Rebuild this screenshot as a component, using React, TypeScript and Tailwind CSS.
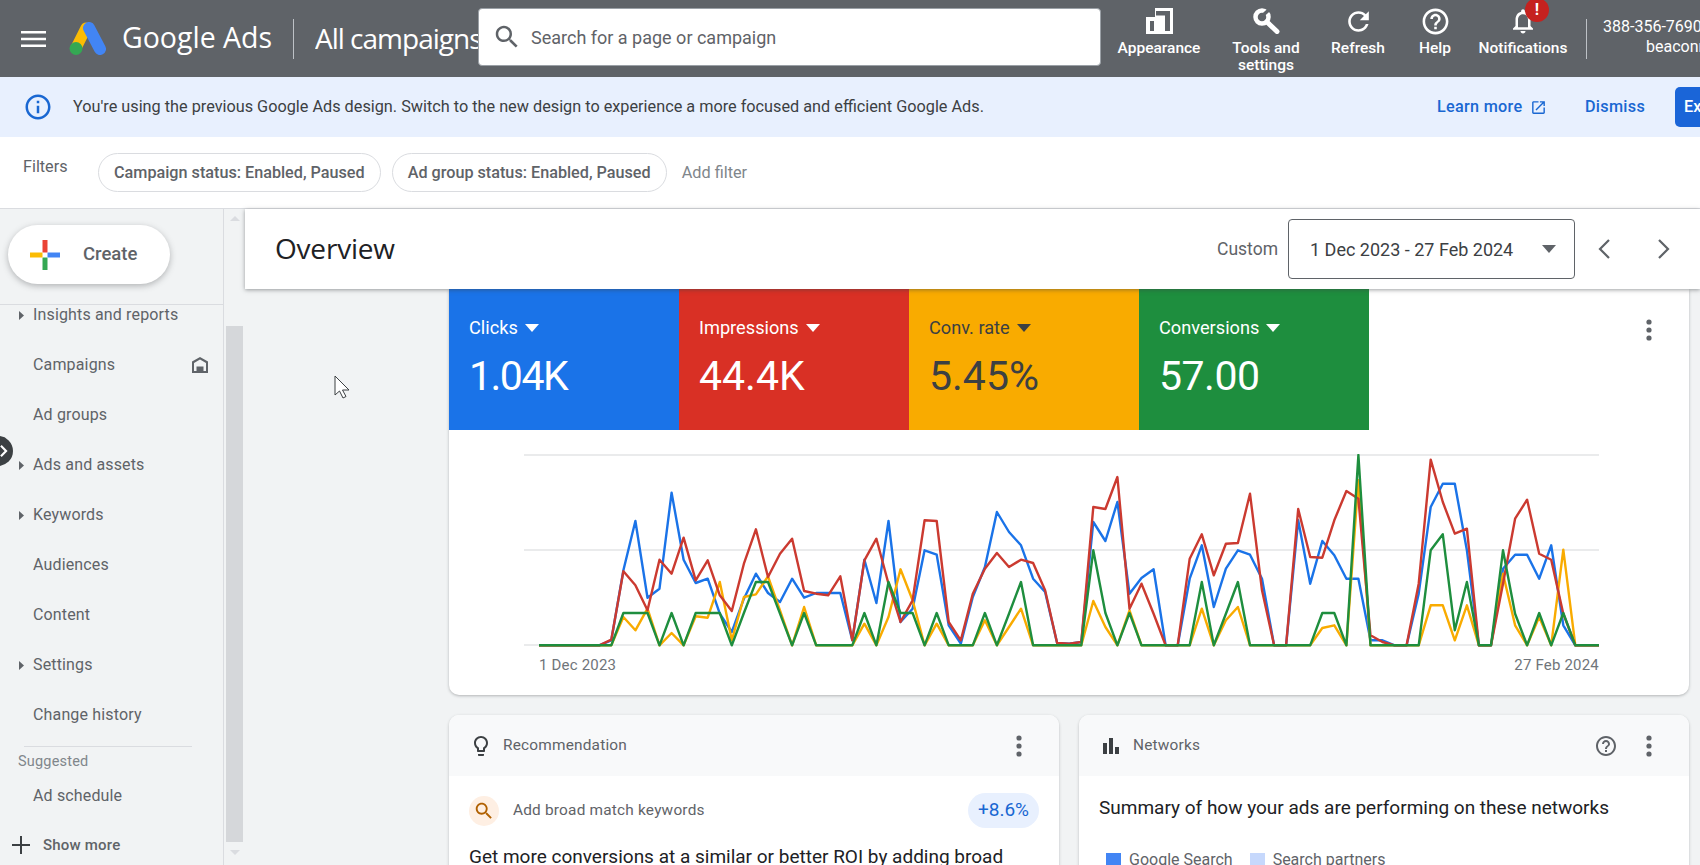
import * as React from 'react'

const P = {
  search:
    'M15.5 14h-.79l-.28-.27C15.41 12.59 16 11.11 16 9.5 16 5.91 13.09 3 9.5 3S3 5.91 3 9.5 5.91 16 9.5 16c1.61 0 3.09-.59 4.23-1.57l.27.28v.79l5 4.99L20.49 19l-4.99-5zm-6 0C7.01 14 5 11.99 5 9.5S7.01 5 9.5 5 14 7.01 14 9.5 11.99 14 9.5 14z',
  refresh:
    'M17.65 6.35C16.2 4.9 14.21 4 12 4c-4.42 0-7.99 3.58-7.99 8s3.57 8 7.99 8c3.73 0 6.84-2.55 7.73-6h-2.08c-.82 2.33-3.04 4-5.65 4-3.31 0-6-2.69-6-6s2.69-6 6-6c1.66 0 3.14.69 4.22 1.78L13 11h7V4l-2.35 2.35z',
  help:
    'M11 18h2v-2h-2v2zm1-16C6.48 2 2 6.48 2 12s4.48 10 10 10 10-4.48 10-10S17.52 2 12 2zm0 18c-4.41 0-8-3.59-8-8s3.59-8 8-8 8 3.59 8 8-3.59 8-8 8zm0-14c-2.21 0-4 1.79-4 4h2c0-1.1.9-2 2-2s2 .9 2 2c0 2-3 1.75-3 5h2c0-2.25 3-2.5 3-5 0-2.21-1.79-4-4-4z',
  bell:
    'M12 22c1.1 0 2-.9 2-2h-4c0 1.1.9 2 2 2zm6-6v-5c0-3.07-1.63-5.64-4.5-6.32V4c0-.83-.67-1.5-1.5-1.5s-1.5.67-1.5 1.5v.68C7.64 5.36 6 7.92 6 11v5l-2 2v1h16v-1l-2-2zm-2 1H8v-6c0-2.48 1.51-4.5 4-4.5s4 2.02 4 4.5v6z',
  info:
    'M11 7h2v2h-2V7zm0 4h2v6h-2v-6zm1-9C6.48 2 2 6.48 2 12s4.48 10 10 10 10-4.48 10-10S17.52 2 12 2zm0 18c-4.41 0-8-3.59-8-8s3.59-8 8-8 8 3.59 8 8-3.59 8-8 8z',
  open:
    'M19 19H5V5h7V3H5c-1.11 0-2 .9-2 2v14c0 1.1.89 2 2 2h14c1.1 0 2-.9 2-2v-7h-2v7zM14 3v2h3.59l-9.83 9.83 1.41 1.41L19 6.41V10h2V3h-7z',
  bulb:
    'M9 21c0 .55.45 1 1 1h4c.55 0 1-.45 1-1v-1H9v1zm3-19C8.14 2 5 5.14 5 9c0 2.38 1.19 4.47 3 5.74V17c0 .55.45 1 1 1h6c.55 0 1-.45 1-1v-2.26c1.81-1.27 3-3.36 3-5.74 0-3.86-3.14-7-7-7zm2.85 11.1l-.85.6V16h-4v-2.3l-.85-.6C7.8 12.16 7 10.63 7 9c0-2.76 2.24-5 5-5s5 2.24 5 5c0 1.63-.8 3.16-2.15 4.1z',
  bars: 'M4 9h4v11H4zM10 4h4v16h-4zM16 13h4v7h-4z',
}

function Icon({ d, className }: { d: string; className?: string }) {
  return (
    <svg viewBox="0 0 24 24" fill="currentColor" className={className}>
      <path d={d} />
    </svg>
  )
}

function Kebab() {
  return (
    <svg viewBox="0 0 6 22" fill="#5f6368" className="h-[22px] w-[6px]">
      <circle cx="3" cy="3" r="2.6" />
      <circle cx="3" cy="11" r="2.6" />
      <circle cx="3" cy="19" r="2.6" />
    </svg>
  )
}

function Caret({ color }: { color: string }) {
  return (
    <svg viewBox="0 0 14 8" className="h-[8px] w-[14px]" fill={color}>
      <path d="M0 0h14L7 8z" />
    </svg>
  )
}

type ToolConfig = {
  label: string[]
  width: string
  icon: React.ReactNode
}

const tools: ToolConfig[] = [
  {
    label: ['Appearance'],
    width: 'w-[110px]',
    icon: (
      <svg viewBox="0 0 27 26" className="h-[26px] w-[27px]" fill="#fff">
        <path fillRule="evenodd" d="M0 9h9V0h18v26H0zM4 13v10h4V13zM10 3v4.500h9V23h5V3z" />
      </svg>
    ),
  },
  {
    label: ['Tools and', 'settings'],
    width: 'w-[104px]',
    icon: (
      <svg viewBox="0 0 27 26" className="h-[26px] w-[27px]" fill="none" stroke="#fff">
        <circle cx="9" cy="9" r="6.500" strokeWidth="4.500" />
        <path d="M14 14L24 23.500" strokeWidth="5" strokeLinecap="round" />
        <path d="M9 8L17 1" stroke="#5f6368" strokeWidth="3.500" />
      </svg>
    ),
  },
  { label: ['Refresh'], width: 'w-[80px]', icon: <Icon d={P.refresh} className="h-[31px] w-[31px] text-white" /> },
  { label: ['Help'], width: 'w-[74px]', icon: <Icon d={P.help} className="h-[31px] w-[31px] text-white" /> },
  {
    label: ['Notifications'],
    width: 'w-[102px]',
    icon: (
      <span className="relative block">
        <Icon d={P.bell} className="h-[30px] w-[30px] text-white" />
        <span className="absolute -top-[8px] left-[17px] flex h-[24px] w-[24px] items-center justify-center rounded-full bg-[#c5221f] text-[16px] font-bold text-white">
          !
        </span>
      </span>
    ),
  },
]

function Header() {
  return (
    <header className="flex h-[77px] shrink-0 items-center bg-[#5f6368] text-white">
      <svg viewBox="0 0 25 16" className="ml-[21px] h-[16px] w-[25px] shrink-0" fill="#fff">
        <path d="M0 0h25v2.600H0zM0 6.700h25v2.600H0zM0 13.400h25V16H0z" />
      </svg>
      <svg viewBox="0 0 37 33" className="ml-[23px] h-[33px] w-[37px] shrink-0">
        <path d="M17 6 L7 26" stroke="#fbbc04" strokeWidth="11" strokeLinecap="round" />
        <path d="M20 6 L31 27" stroke="#4285f4" strokeWidth="12" strokeLinecap="round" />
        <circle cx="7" cy="26.500" r="6.500" fill="#34a853" />
      </svg>
      <span className="ml-[16px] -mt-[3px] w-[150px] shrink-0 whitespace-nowrap font-['Open_Sans',sans-serif] text-[28.500px]">
        Google Ads
      </span>
      <span className="ml-[21px] h-[40px] w-px shrink-0 bg-[#bdc1c6]" />
      <div className="ml-[21px] -mt-[2px] w-[163px] shrink-0 overflow-hidden whitespace-nowrap font-['Open_Sans',sans-serif] text-[28px] tracking-[-1px]">
        All campaigns
      </div>
      <div className="-mt-[3px] flex h-[58px] w-[623px] shrink-0 items-center rounded-[4px] border border-[#9aa0a6] bg-white text-[#5f6368]">
        <Icon d={P.search} className="ml-[13px] h-[30px] w-[30px] text-[#5f6368]" />
        <span className="ml-[9px] text-[18px]">Search for a page or campaign</span>
      </div>
      <div className="flex shrink-0 self-stretch pl-[3px]">
        {tools.map((tool) => (
          <div key={tool.label[0]} className={`flex ${tool.width} shrink-0 flex-col items-center pt-[5px]`}>
            <div className="flex h-[32px] items-center justify-center">{tool.icon}</div>
            <div className="mt-[3px] whitespace-nowrap text-center text-[15.500px] font-medium leading-[17px]">
              {tool.label.map((line) => (
                <div key={line}>{line}</div>
              ))}
            </div>
          </div>
        ))}
      </div>
      <span className="ml-[12px] h-[40px] w-px shrink-0 bg-[#bdc1c6]" />
      <div className="ml-[16px] -mt-[3px] shrink-0 whitespace-nowrap text-[16px] leading-[20px]">
        <div>388-356-7690</div>
        <div className="ml-[43px]">beaconn</div>
      </div>
    </header>
  )
}

function Banner() {
  return (
    <div className="flex h-[60px] shrink-0 items-center whitespace-nowrap bg-[#e8f0fe]">
      <Icon d={P.info} className="ml-[23px] h-[30px] w-[30px] shrink-0 text-[#1967d2]" />
      <span className="ml-[20px] w-[1364px] shrink-0 text-[16.250px] text-[#3c4043]">
        You're using the previous Google Ads design. Switch to the new design to experience a more focused and efficient
        Google Ads.
      </span>
      <span className="w-[86px] shrink-0 text-[16.200px] font-medium tracking-[0.3px] text-[#1967d2]">Learn more</span>
      <Icon d={P.open} className="ml-[7px] h-[17px] w-[17px] shrink-0 text-[#1967d2]" />
      <span className="ml-[38px] w-[59px] shrink-0 text-[16.200px] font-medium tracking-[0.3px] text-[#1967d2]">Dismiss</span>
      <div className="ml-[31px] flex h-[40px] w-[100px] shrink-0 items-center rounded-[5px] bg-[#1a65d8] pl-[9px] text-[16.200px] font-medium text-white">
        Explore
      </div>
    </div>
  )
}

function Filters() {
  const chips = ['Campaign status: Enabled, Paused', 'Ad group status: Enabled, Paused']
  return (
    <div className="flex h-[72px] shrink-0 border-b border-[#dadce0] bg-white">
      <span className="ml-[23px] mt-[18px] w-[75px] text-[16.200px] text-[#5f6368]">Filters</span>
      <div className="mt-[16px] flex h-[39px] items-center gap-[11px]">
        {chips.map((chip) => (
          <span
            key={chip}
            className="flex h-[39px] items-center rounded-full border border-[#dadce0] px-[15px] pt-[2px] text-[16.200px] font-medium text-[#5f6368]"
          >
            {chip}
          </span>
        ))}
        <span className="ml-[4px] pt-[2px] text-[16.300px] text-[#80868b]">Add filter</span>
      </div>
    </div>
  )
}

const navItems = [
  { label: 'Insights and reports', arrow: true },
  { label: 'Campaigns', home: true },
  { label: 'Ad groups' },
  { label: 'Ads and assets', arrow: true },
  { label: 'Keywords', arrow: true },
  { label: 'Audiences' },
  { label: 'Content' },
  { label: 'Settings', arrow: true },
  { label: 'Change history' },
]

function Sidebar() {
  return (
    <aside className="flex h-full w-[245px] shrink-0 bg-[#f1f3f4]">
      <div className="flex w-[224px] shrink-0 flex-col border-r border-[#dadce0]">
        <div className="h-[96px] shrink-0 border-b border-[#dadce0] pl-[8px] pt-[16px]">
          <div className="flex h-[59px] w-[162px] items-center rounded-full bg-white shadow-[0_2px_6px_rgba(60,64,67,0.35)]">
            <svg viewBox="0 0 30 30" className="ml-[22px] h-[30px] w-[30px]">
              <path d="M12.500 0h5v12.500h-5z" fill="#ea4335" />
              <path d="M17.500 12.500H30v5H17.500z" fill="#4285f4" />
              <path d="M12.500 17.500h5V30h-5z" fill="#34a853" />
              <path d="M0 12.500h12.500v5H0z" fill="#fbbc04" />
            </svg>
            <span className="ml-[23px] text-[18.500px] font-medium text-[#5f6368]">Create</span>
          </div>
        </div>
        <div className="flex-1 overflow-hidden">
          <div className="-mt-[15px]">
            {navItems.map((item) => (
              <div key={item.label} className="flex h-[50px] items-center text-[16px] tracking-[0.15px] text-[#5f6368]">
                <span className="flex w-[33px] justify-end pr-[9px]">
                  {item.arrow && (
                    <svg viewBox="0 0 5 9" className="h-[9px] w-[5px]" fill="#5f6368">
                      <path d="M0 0l5 4.500L0 9z" />
                    </svg>
                  )}
                </span>
                <span>{item.label}</span>
                {item.home && (
                  <svg viewBox="0 0 18 16" className="ml-auto mr-[14px] h-[16px] w-[18px]" fill="#5f6368">
                    <path fillRule="evenodd" d="M9 0l8 4.500V16H1V4.500zM3 6v8h2.500V9.500h7V14H15V6L9 2.500z" />
                  </svg>
                )}
              </div>
            ))}
            <div className="ml-[24px] mr-[31px] mt-[6px] border-t border-[#dadce0]" />
            <div className="ml-[18px] mt-[6px] text-[14.500px] leading-[18px] tracking-[0.2px] text-[#80868b]">Suggested</div>
            <div className="ml-[33px] mt-[14px] text-[16px] leading-[22px] tracking-[0.15px] text-[#5f6368]">Ad schedule</div>
            <div className="mt-[27px] flex h-[22px] items-center">
              <svg viewBox="0 0 18 18" className="ml-[12px] h-[18px] w-[18px]" fill="#3c4043">
                <path d="M8 0h2v8h8v2h-8v8H8v-8H0V8h8z" />
              </svg>
              <span className="ml-[13px] text-[15px] font-medium tracking-[0.2px] text-[#5f6368]">Show more</span>
            </div>
          </div>
        </div>
      </div>
      <div className="flex w-[21px] shrink-0 flex-col items-center px-[2px] pt-[7px]">
        <svg viewBox="0 0 10 5" className="h-[5px] w-[10px]" fill="#dadce0">
          <path d="M5 0l5 5H0z" />
        </svg>
        <div className="mt-[105px] h-[516px] w-[17px] shrink-0 bg-[#d5d7da]" />
        <svg viewBox="0 0 10 5" className="mt-[8px] h-[5px] w-[10px]" fill="#dadce0">
          <path d="M0 0h10L5 5z" />
        </svg>
      </div>
    </aside>
  )
}

function OverviewBar() {
  return (
    <div className="relative z-10 flex h-[80px] shrink-0 items-center bg-white shadow-[0_1px_4px_rgba(60,64,67,0.5)]">
      <h1 className="-mt-[3px] ml-[30px] font-['Open_Sans',sans-serif] text-[28px] tracking-[-0.2px] text-[#202124]">
        Overview
      </h1>
      <span className="ml-auto text-[17.500px] text-[#5f6368]">Custom</span>
      <div className="ml-[10px] flex h-[60px] w-[287px] items-center rounded-[4px] border border-[#5f6368] pl-[21px] pr-[18px] text-[18px] text-[#3c4043]">
        <span>1 Dec 2023 - 27 Feb 2024</span>
        <span className="ml-auto">
          <Caret color="#5f6368" />
        </span>
      </div>
      <svg viewBox="0 0 12 20" className="ml-[23px] h-[20px] w-[12px]" fill="none" stroke="#5f6368" strokeWidth="2.200">
        <path d="M11 1L2 10l9 9" />
      </svg>
      <svg viewBox="0 0 12 20" className="ml-[48px] mr-[30px] h-[20px] w-[12px]" fill="none" stroke="#5f6368" strokeWidth="2.200">
        <path d="M1 1l9 9-9 9" />
      </svg>
    </div>
  )
}

const metrics = [
  { label: 'Clicks', value: '1.04K', bg: 'bg-[#1a73e8]', text: 'text-white', caret: '#fff', track: 'tracking-[-1.5px]' },
  { label: 'Impressions', value: '44.4K', bg: 'bg-[#d93025]', text: 'text-white', caret: '#fff', track: '' },
  { label: 'Conv. rate', value: '5.45%', bg: 'bg-[#f9ab00]', text: 'text-[#3c4043]', caret: '#3c4043', track: '' },
  { label: 'Conversions', value: '57.00', bg: 'bg-[#1e8e3e]', text: 'text-white', caret: '#fff', track: 'tracking-[-0.5px]' },
]

// values are read off the reference, 524 = top grid line, 1095 = baseline (3 units per px)
const B = 1095
const chartData = {
  blue: [
    B, B, B, B, B, B, 1080, 870, 722, 952, 925, 637, 838, 908, 895, 1000, 1055, 955, 880, 938, 965, 895, 952, 938, 938,
    938, 1080, 838, 968, 722, 1025, 985, 810, 823, 1035, 1090, 950, 860, 695, 755, 795, 895, 935, 1088, 1090, 1085, 725,
    782, 665, 940, 893, 867, B, B, 895, 795, 980, 865, 810, 823, 895, B, B, 720, 910, 782, 825, 895, 895, 1080, 1080, B,
    B, 940, 680, 610, 610, 810, B, B, 865, 823, 823, 895, 795, 1035, B, B, B,
  ],
  yellow: [
    B, B, B, B, B, B, B, 1010, 1050, 985, B, 1058, B, 1008, 1012, 905, 1080, 950, 942, 888, 990, B, 980, B, B, B, B,
    1030, B, 1010, 867, 960, B, 1030, B, B, B, 1020, B, 1040, 985, B, B, B, B, B, 962, 1040, B, 990, B, B, B, B, B, 985,
    B, 1020, 980, B, B, B, B, B, B, 1043, 1035, B, 600, B, B, B, B, B, 975, 975, 1080, 975, B, B, 880, 1035, B, 1010, B,
    808, B, B, B,
  ],
  red: [
    B, B, B, B, B, B, 1078, 873, 915, 990, 838, 880, 772, 900, 840, 945, 992, 850, 747, 890, 820, 775, 932, 940, 945,
    888, 1080, 840, 775, 910, 1025, 960, 720, 722, 1025, 1080, 940, 865, 818, 860, 838, 848, 930, 1088, 1090, 1085, 680,
    686, 590, 985, 910, 1000, B, B, 835, 762, 885, 790, 788, 640, 930, B, B, 686, 830, 832, 720, 632, 655, 1065, 1085, B,
    B, 910, 538, 665, 760, 745, B, B, 910, 715, 658, 820, 838, 1000, B, B, B,
  ],
  green: [
    B, B, B, B, B, B, B, 998, 998, 998, B, 998, B, 998, 998, 998, B, 998, 905, 905, 1000, B, 998, B, B, B, B, 998, B, 905,
    998, 998, B, 998, B, B, B, 998, B, 1000, 905, B, B, B, B, B, 810, 998, B, 998, B, B, B, B, B, 905, B, 1000, 905, B, B,
    B, B, B, B, 998, 998, B, 524, B, B, B, B, B, 810, 762, 1050, 905, B, B, 810, 1000, B, 998, B, 998, B, B, B,
  ],
}

function toPoints(series: number[]) {
  return series.map((v, i) => `${(15 + 12.05 * i).toFixed(1)},${((v - 524) / 3 + 1).toFixed(1)}`).join(' ')
}

function Chart() {
  return (
    <div className="ml-[75px] mr-[90px] mt-[24px]">
      <svg viewBox="0 0 1075 194" className="block h-[194px] w-[1075px]" fill="none">
        {[1, 96, 191].map((y) => (
          <line key={y} x1="0" x2="1075" y1={y} y2={y} stroke="#e3e4e6" strokeWidth="1.500" />
        ))}
        <polyline points={toPoints(chartData.blue)} stroke="#1a73e8" strokeWidth="2.400" strokeLinejoin="round" />
        <polyline points={toPoints(chartData.yellow)} stroke="#f9ab00" strokeWidth="2.400" strokeLinejoin="round" />
        <polyline points={toPoints(chartData.red)} stroke="#cb3a30" strokeWidth="2.400" strokeLinejoin="round" />
        <polyline points={toPoints(chartData.green)} stroke="#1e8e3e" strokeWidth="2.400" strokeLinejoin="round" />
      </svg>
      <div className="ml-[15px] mt-[6px] flex justify-between text-[15px] tracking-[0.2px] text-[#70757a]">
        <span>1 Dec 2023</span>
        <span>27 Feb 2024</span>
      </div>
    </div>
  )
}

function CardHead({ title, icon, children }: { title: string; icon: React.ReactNode; children: React.ReactNode }) {
  return (
    <div className="flex h-[61px] items-center bg-[#f8f9fa] pl-[20px] pr-[37px]">
      <span className="flex w-[34px] justify-start">{icon}</span>
      <span className="text-[15.400px] tracking-[0.2px] text-[#5f6368]">{title}</span>
      <span className="ml-auto flex items-center gap-[28px]">{children}</span>
    </div>
  )
}

export default function App() {
  return (
    <div className="relative flex h-[865px] w-[1700px] flex-col overflow-hidden bg-[#f1f3f4] font-['Roboto',sans-serif]">
      <Header />
      <Banner />
      <Filters />
      <div className="flex min-h-0 flex-1">
        <Sidebar />
        <main className="flex min-w-0 flex-1 flex-col">
          <OverviewBar />
          <div className="flex-1 overflow-hidden pl-[204px] pr-[11px]">
            <section className="h-[406px] rounded-b-[10px] bg-white shadow-[0_1px_3px_rgba(60,64,67,0.35)]">
              <div className="flex h-[141px]">
                {metrics.map((m) => (
                  <div key={m.label} className={`w-[230px] ${m.bg} ${m.text} pl-[20px] pt-[26px]`}>
                    <div className="flex items-center gap-[7px] text-[18.200px] leading-[26px]">
                      {m.label}
                      <Caret color={m.caret} />
                    </div>
                    <div className={`mt-[11px] text-[41px] leading-[48px] ${m.track}`}>{m.value}</div>
                  </div>
                ))}
                <div className="ml-auto mr-[37px] pt-[30px]">
                  <Kebab />
                </div>
              </div>
              <Chart />
            </section>
            <div className="mt-[20px] grid grid-cols-2 gap-[20px]">
              <section className="h-[200px] rounded-[10px] bg-white shadow-[0_1px_3px_rgba(60,64,67,0.3)]">
                <div className="overflow-hidden rounded-t-[10px]">
                  <CardHead title="Recommendation" icon={<Icon d={P.bulb} className="h-[24px] w-[24px] text-[#3c4043]" />}>
                    <Kebab />
                  </CardHead>
                </div>
                <div className="mt-[17px] flex h-[35px] items-center pl-[20px] pr-[20px]">
                  <span className="flex h-[30px] w-[30px] items-center justify-center rounded-full bg-[#feefe3]">
                    <Icon d={P.search} className="h-[22px] w-[22px] text-[#b06000]" />
                  </span>
                  <span className="ml-[14px] text-[15.400px] tracking-[0.2px] text-[#5f6368]">Add broad match keywords</span>
                  <span className="ml-auto flex h-[35px] w-[71px] items-center justify-center rounded-full bg-[#e8f0fe] text-[19px] text-[#1967d2]">
                    +8.6%
                  </span>
                </div>
                <div className="ml-[20px] mt-[16px] whitespace-nowrap text-[19px] leading-[26px] text-[#202124]">
                  Get more conversions at a similar or better ROI by adding broad
                </div>
              </section>
              <section className="h-[200px] rounded-[10px] bg-white shadow-[0_1px_3px_rgba(60,64,67,0.3)]">
                <div className="overflow-hidden rounded-t-[10px]">
                  <CardHead title="Networks" icon={<Icon d={P.bars} className="h-[24px] w-[24px] text-[#3c4043]" />}>
                    <Icon d={P.help} className="h-[24px] w-[24px] text-[#5f6368]" />
                    <Kebab />
                  </CardHead>
                </div>
                <div className="ml-[20px] mt-[19px] whitespace-nowrap text-[19px] leading-[26px] text-[#202124]">
                  Summary of how your ads are performing on these networks
                </div>
                <div className="ml-[27px] mt-[29px] flex items-center text-[16px] leading-[20px] text-[#5f6368]">
                  <span className="h-[15px] w-[15px] bg-[#4285f4]" />
                  <span className="ml-[8px]">Google Search</span>
                  <span className="ml-[17px] h-[15px] w-[15px] bg-[#c6d8fc]" />
                  <span className="ml-[8px]">Search partners</span>
                </div>
              </section>
            </div>
          </div>
        </main>
      </div>
      <div className="absolute left-[-17px] top-[436px] flex h-[30px] w-[30px] items-center justify-end rounded-full bg-[#3c4043] pr-[5px]">
        <svg viewBox="0 0 10 14" className="h-[12px] w-[9px]" fill="none" stroke="#fff" strokeWidth="2.500">
          <path d="M2 1l6 6-6 6" />
        </svg>
      </div>
      <svg viewBox="0 0 16 24" className="absolute left-[334px] top-[375px] h-[24px] w-[16px]">
        <path d="M1 1v19l4.500-4 3.500 7 3-1.500-3.500-6.500H15z" fill="#fff" stroke="#3c4043" strokeWidth="1" />
      </svg>
    </div>
  )
}
